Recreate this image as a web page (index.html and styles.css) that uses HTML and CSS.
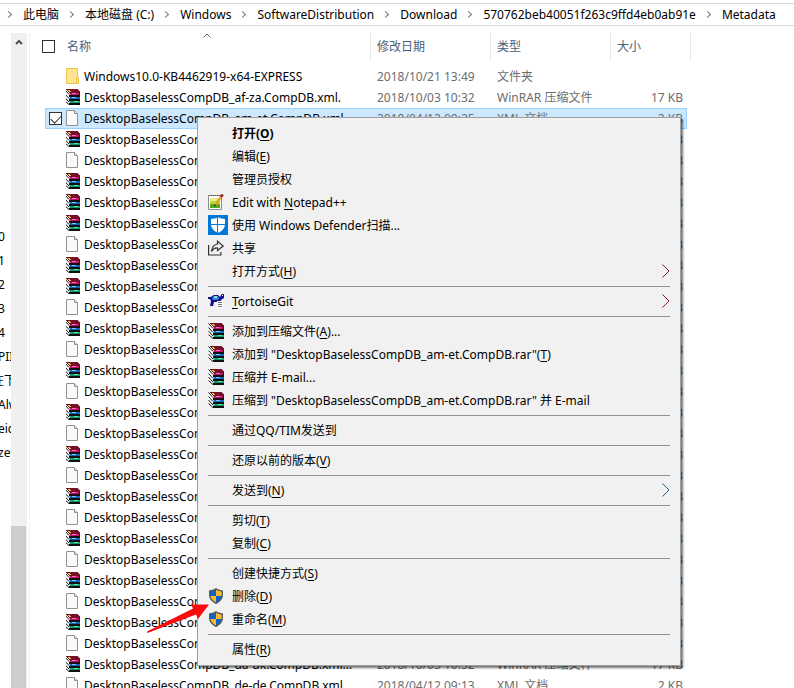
FILE: index.html
```html
<!DOCTYPE html>
<html lang="zh-CN">
<head>
<meta charset="utf-8">
<title>Metadata</title>
<link rel="stylesheet" href="styles.css">
</head>
<body>
<svg class="sprite" aria-hidden="true">
  <symbol id="rar" viewBox="0 0 16 16">
    <g shape-rendering="crispEdges">
    <path fill="#fff" d="M0 1h3l3 4v11H4L0 11z"/>
    <path fill="#111" d="M5 4h11v12H5z"/>
    <path fill="#74102c" d="M2 0h11l3 3v1H5z"/>
    <path fill="#c01468" d="M6 4h9v2H6z"/><path fill="#ff70b8" d="M8 4h4v1H8z"/>
    <path fill="#1468bc" d="M6 8h10v2H6z"/><path fill="#7cc4ff" d="M8 8h4v1H8z"/>
    <path fill="#0ca070" d="M6 12h10v2H6z"/><path fill="#60e0a8" d="M10 12h4v1h-4z"/>
    <path fill="#e8d020" d="M4 1h2v1H4zM5 2h2v1H5zM5 4h1v2H5zM5 8h1v2H5zM5 12h1v2H5z"/>
    </g>
    <path fill="none" stroke="#111" d="M.5.500l4.500 5M.5 4.500L5 9.500M.5 8l4.500 5M.5 11.500L5 15.500"/>
  </symbol>
  <symbol id="doc" viewBox="0 0 16 16">
    <path fill="#fafafa" stroke="#929292" d="M2.500.500h8l3 3v12h-11z"/>
    <path fill="#e4e4e4" stroke="#929292" d="M10.500.500v3h3"/>
  </symbol>
  <symbol id="folder" viewBox="0 0 16 16">
    <path fill="#ffe48f" stroke="#edc34c" d="M2.500.500h11v9h1v6h-12z"/>
    <path fill="none" stroke="#edc34c" d="M12.500 15v-5h1"/>
  </symbol>
  <symbol id="shield" viewBox="0 0 16 16">
    <path fill="#fdb92c" d="M8 .5l1.500 1L14.500 3v4q0 5-6.500 8.500Q1.500 12 1.500 7V3l5-1.500z"/>
    <path fill="#0a64c8" d="M8 .5V8H1.500V3l5-1.500zM8 8h6.300q-.6 4-6.300 7.500z"/>
    <path fill="none" stroke="#505860" stroke-width="1.300" d="M8 .8l1.500 1L14.300 3v4q0 5-6.300 8.300Q1.700 12 1.700 7V3l4.800-1.200z"/>
  </symbol>
  <symbol id="notepad" viewBox="0 0 16 16">
    <path fill="#fff" stroke="#8c8c8c" d="M.5 1.500h13v14H.5z"/>
    <path fill="#e4ee90" d="M2 4h10v3H2z"/><path fill="#b4dc3c" d="M2 7h10v3H2z"/><path fill="#4fae20" d="M2 10h10v4H2z"/>
    <path stroke="#555" stroke-dasharray="1 1" d="M1 1.500h12"/>
    <path stroke="#e8a020" stroke-width="2.500" d="M7.500 11l5-7.500"/>
    <path stroke="#a01818" stroke-width="2.500" d="M12.800 3l2-2.500"/><path fill="#333" d="M6 13l.5-3 2 1.500z"/>
  </symbol>
  <symbol id="defender" viewBox="0 0 20 20">
    <path fill="#0078d7" d="M0 0h20v20H0z"/>
    <path fill="#fff" d="M10 2l2 1.200L17 4v5q0 6-7 9-7-3-7-9V4l5-.8z"/>
    <path stroke="#0078d7" d="M9.500 2v16M3 9.500h14"/>
  </symbol>
  <symbol id="share" viewBox="0 0 16 16">
    <path fill="none" stroke="#333" stroke-width="1.200" d="M.6 5v10h12.300v-3M9.500 1.200l5.700 4.800-5.700 4.500V8Q6 7.500 3.500 11.500 4 5 9.500 4z"/>
  </symbol>
  <symbol id="tortoise" viewBox="0 0 16 16">
    <path fill="#10108c" d="M0 4h3l1-1 2-1h4l2 2 1-2 1-1h2v4l-3 2-1 2 1 3h-3L9 9H6l-1 4H2l1-5-1-2H0z"/>
    <path fill="#3090d8" d="M4 5l2-2h4l1 3-2 1H5z"/><path fill="#78e0e8" d="M6 3h3v2H6z"/><path fill="#fff" d="M14 2h1v1h-1z"/>
    <path fill="#fff" d="M9 8h6v7H9z"/><path stroke="#777" d="M10 9.500h4M10 11.500h4M10 13.500h4"/>
  </symbol>
</svg>

<nav class="breadcrumb" aria-label="路径">
  <a href="#">此电脑</a><a href="#">本地磁盘 (C:)</a><a href="#">Windows</a><a href="#">SoftwareDistribution</a><a href="#">Download</a><a href="#">570762beb40051f263c9ffd4eb0ab91e</a><a href="#">Metadata</a>
</nav>

<main class="explorer">
  <ul class="tree">
    <li>0</li><li>1</li><li>2</li><li>3</li><li>4</li><li>PII</li><li class="cut">在下</li><li>Alw</li><li>eic</li><li>ze</li>
  </ul>
  <div class="scrollbar"><svg class="up" viewBox="0 0 8 6"><path d="M1 5l3-3 3 3"/></svg><div class="thumb"></div></div>
  <section class="files">
    <svg class="sort" viewBox="0 0 8 5"><path d="M.5 4.500L4 1l3.500 3.500"/></svg>
    <table>
      <colgroup><col class="c-check"><col class="c-name"><col class="c-date"><col class="c-type"><col class="c-size"></colgroup>
      <thead><tr><th><input type="checkbox" aria-label="全选"></th><th>名称</th><th>修改日期</th><th>类型</th><th>大小</th></tr></thead>
      <tbody>
        <tr><td></td><td><svg><use href="#folder"/></svg>Windows10.0-KB4462919-x64-EXPRESS</td><td>2018/10/21 13:49</td><td>文件夹</td><td></td></tr>
        <tr><td></td><td><svg><use href="#rar"/></svg>DesktopBaselessCompDB_af-za.CompDB.xml.</td><td>2018/10/03 10:32</td><td>WinRAR 压缩文件</td><td>17 KB</td></tr>
        <tr class="selected"><td><input type="checkbox" aria-label="选择" checked></td><td><svg><use href="#doc"/></svg>DesktopBaselessCompDB_am-et.CompDB.xml</td><td>2018/04/12 09:25</td><td>XML 文档</td><td>2 KB</td></tr>
        <tr><td></td><td><svg><use href="#rar"/></svg>DesktopBaselessCompDB</td><td></td><td></td><td>17 KB</td></tr>
        <tr><td></td><td><svg><use href="#doc"/></svg>DesktopBaselessCompDB</td><td></td><td></td><td>2 KB</td></tr>
        <tr><td></td><td><svg><use href="#rar"/></svg>DesktopBaselessCompDB</td><td></td><td></td><td>17 KB</td></tr>
        <tr><td></td><td><svg><use href="#rar"/></svg>DesktopBaselessCompDB</td><td></td><td></td><td>17 KB</td></tr>
        <tr><td></td><td><svg><use href="#rar"/></svg>DesktopBaselessCompDB</td><td></td><td></td><td>17 KB</td></tr>
        <tr><td></td><td><svg><use href="#doc"/></svg>DesktopBaselessCompDB</td><td></td><td></td><td>2 KB</td></tr>
        <tr><td></td><td><svg><use href="#rar"/></svg>DesktopBaselessCompDB</td><td></td><td></td><td>17 KB</td></tr>
        <tr><td></td><td><svg><use href="#rar"/></svg>DesktopBaselessCompDB</td><td></td><td></td><td>17 KB</td></tr>
        <tr><td></td><td><svg><use href="#doc"/></svg>DesktopBaselessCompDB</td><td></td><td></td><td>2 KB</td></tr>
        <tr><td></td><td><svg><use href="#rar"/></svg>DesktopBaselessCompDB</td><td></td><td></td><td>17 KB</td></tr>
        <tr><td></td><td><svg><use href="#doc"/></svg>DesktopBaselessCompDB</td><td></td><td></td><td>2 KB</td></tr>
        <tr><td></td><td><svg><use href="#rar"/></svg>DesktopBaselessCompDB</td><td></td><td></td><td>17 KB</td></tr>
        <tr><td></td><td><svg><use href="#doc"/></svg>DesktopBaselessCompDB</td><td></td><td></td><td>2 KB</td></tr>
        <tr><td></td><td><svg><use href="#rar"/></svg>DesktopBaselessCompDB</td><td></td><td></td><td>17 KB</td></tr>
        <tr><td></td><td><svg><use href="#doc"/></svg>DesktopBaselessCompDB</td><td></td><td></td><td>2 KB</td></tr>
        <tr><td></td><td><svg><use href="#rar"/></svg>DesktopBaselessCompDB</td><td></td><td></td><td>17 KB</td></tr>
        <tr><td></td><td><svg><use href="#doc"/></svg>DesktopBaselessCompDB</td><td></td><td></td><td>2 KB</td></tr>
        <tr><td></td><td><svg><use href="#rar"/></svg>DesktopBaselessCompDB</td><td></td><td></td><td>17 KB</td></tr>
        <tr><td></td><td><svg><use href="#doc"/></svg>DesktopBaselessCompDB</td><td></td><td></td><td>2 KB</td></tr>
        <tr><td></td><td><svg><use href="#rar"/></svg>DesktopBaselessCompDB</td><td></td><td></td><td>17 KB</td></tr>
        <tr><td></td><td><svg><use href="#doc"/></svg>DesktopBaselessCompDB</td><td></td><td></td><td>2 KB</td></tr>
        <tr><td></td><td><svg><use href="#rar"/></svg>DesktopBaselessCompDB</td><td></td><td></td><td>17 KB</td></tr>
        <tr><td></td><td><svg><use href="#doc"/></svg>DesktopBaselessCompDB</td><td></td><td></td><td>2 KB</td></tr>
        <tr><td></td><td><svg><use href="#rar"/></svg>DesktopBaselessCompDB</td><td></td><td></td><td>17 KB</td></tr>
        <tr><td></td><td><svg><use href="#doc"/></svg>DesktopBaselessCompDB</td><td></td><td></td><td>2 KB</td></tr>
        <tr><td></td><td><svg><use href="#rar"/></svg>DesktopBaselessCompDB_da-dk.CompDB.xml...</td><td>2018/10/03 10:32</td><td>WinRAR 压缩文件</td><td>17 KB</td></tr>
        <tr><td></td><td><svg><use href="#doc"/></svg>DesktopBaselessCompDB_de-de.CompDB.xml</td><td>2018/04/12 09:13</td><td>XML 文档</td><td>2 KB</td></tr>
      </tbody>
    </table>
  </section>
</main>

<div class="menu" role="menu">
  <button role="menuitem"><i></i><b>打开(<u>O</u>)</b></button>
  <button role="menuitem"><i></i><span>编辑(<u>E</u>)</span></button>
  <button role="menuitem"><i></i><span>管理员授权</span></button>
  <button role="menuitem"><i><svg><use href="#notepad"/></svg></i><span>Edit with <u>N</u>otepad++</span></button>
  <button role="menuitem"><i><svg class="large"><use href="#defender"/></svg></i><span>使用 Windows Defender扫描...</span></button>
  <button role="menuitem"><i><svg><use href="#share"/></svg></i><span>共享</span></button>
  <button role="menuitem"><i></i><span>打开方式(<u>H</u>)</span><svg class="more red" viewBox="0 0 8 14"><path d="M.5.500L7 7 .5 13.500"/></svg></button>
  <hr>
  <button role="menuitem"><i><svg><use href="#tortoise"/></svg></i><span><u>T</u>ortoiseGit</span><svg class="more red" viewBox="0 0 8 14"><path d="M.5.500L7 7 .5 13.500"/></svg></button>
  <hr>
  <button role="menuitem"><i><svg><use href="#rar"/></svg></i><span>添加到压缩文件(<u>A</u>)...</span></button>
  <button role="menuitem"><i><svg><use href="#rar"/></svg></i><span>添加到 "DesktopBaselessCompDB_am-et.CompDB.rar"(<u>T</u>)</span></button>
  <button role="menuitem"><i><svg><use href="#rar"/></svg></i><span>压缩并 E-mail...</span></button>
  <button role="menuitem"><i><svg><use href="#rar"/></svg></i><span>压缩到 "DesktopBaselessCompDB_am-et.CompDB.rar" 并 E-mail</span></button>
  <hr>
  <button role="menuitem"><i></i><span>通过QQ/TIM发送到</span></button>
  <hr>
  <button role="menuitem"><i></i><span>还原以前的版本(<u>V</u>)</span></button>
  <hr>
  <button role="menuitem"><i></i><span>发送到(<u>N</u>)</span><svg class="more blue" viewBox="0 0 8 14"><path d="M.5.500L7 7 .5 13.500"/></svg></button>
  <hr>
  <button role="menuitem"><i></i><span>剪切(<u>T</u>)</span></button>
  <button role="menuitem"><i></i><span>复制(<u>C</u>)</span></button>
  <hr>
  <button role="menuitem"><i></i><span>创建快捷方式(<u>S</u>)</span></button>
  <button role="menuitem"><i><svg><use href="#shield"/></svg></i><span>删除(<u>D</u>)</span></button>
  <button role="menuitem"><i><svg><use href="#shield"/></svg></i><span>重命名(<u>M</u>)</span></button>
  <hr>
  <button role="menuitem"><i></i><span>属性(<u>R</u>)</span></button>
</div>
<svg class="pointer" viewBox="0 0 64 30" aria-hidden="true"><path d="M1 28.500L47 5.500 45 1.500 63 1.500 52 16 50 11.500 1.500 30z"/></svg>
</body>
</html>
```
FILE: styles.css
```css
* { box-sizing: border-box; }
body {
  margin: 0;
  height: 100vh;
  overflow: hidden;
  position: relative;
  display: flex;
  flex-direction: column;
  background: #fff;
  color: #000;
  font: 12px/20px "Noto Sans", "Noto Sans CJK SC", sans-serif;
}
.sprite { position: absolute; width: 0; height: 0; }
svg { width: 16px; height: 16px; flex: none; }

.breadcrumb {
  display: flex;
  flex: none;
  gap: 3px;
  height: 23px;
  margin-top: 3px;
  border: solid #d9d9d9;
  border-width: 1px 0;
  white-space: nowrap;
}
.breadcrumb a { display: flex; align-items: center; color: #000; text-decoration: none; }
.breadcrumb a::before {
  content: "";
  width: 4px;
  height: 4px;
  margin: 0 12px 0 6px;
  border: solid #777;
  border-width: 1px 1px 0 0;
  transform: rotate(45deg);
}

.explorer { display: flex; flex: 1; min-height: 0; padding-top: 7px; }
.tree {
  width: 11px;
  margin: 0;
  padding: 192px 0 0;
  overflow: hidden;
  list-style: none;
  line-height: 24px;
  text-indent: -2px;
  white-space: nowrap;
}
.tree .cut { text-indent: -8px; }
.scrollbar { width: 16px; display: flex; flex-direction: column; align-items: flex-start; background: #f0f0f0; }
.up { width: 8px; height: 6px; margin: 6px 4px 0; fill: none; stroke: #505050; stroke-width: 2; }
.thumb { width: 15px; height: 162px; margin-top: auto; background: #cdcdcd; }

.files { position: relative; flex: 1; margin-left: 2px; padding-left: 15px; border-left: 1px solid #f0f0f0; overflow: hidden; }
.sort { position: absolute; left: 173px; top: 0; width: 8px; height: 5px; fill: none; stroke: #666; }
table { width: 642px; table-layout: fixed; border-collapse: collapse; white-space: nowrap; }
.c-check { width: 21px; }
.c-name { width: 304px; }
.c-date, .c-type { width: 120px; }
th { height: 33px; padding: 0 0 6px 7px; text-align: left; font-weight: 400; color: #4c607a; }
th:nth-child(2) { padding-left: 1px; }
th:nth-child(n+3) { background: linear-gradient(#e5e5e5, #e5e5e5) 0 0 / 1px 27px no-repeat; }
th:last-child { border-right: 1px solid #e5e5e5; }
td { height: 21px; padding: 0 0 0 7px; line-height: 20px; color: #6d6d6d; overflow: hidden; }
th:first-child { padding-left: 0; }
th:last-child { border-right: 0; }
td:first-child { padding: 0 0 0 4px; }
td:nth-child(2) { padding: 0; color: #000; }
td:last-child { padding: 0 4px 0 0; text-align: right; }
td svg { margin-right: 4px; margin-left: -2px; vertical-align: -3px; }
.files::after {
  content: "";
  position: absolute;
  left: 660px;
  top: 0;
  height: 27px;
  border-left: 1px solid #e5e5e5;
}
.selected td { background: #cce8ff; box-shadow: inset 0 1px #99d1ff, inset 0 -1px #99d1ff; }
.selected td:first-child { box-shadow: inset 1px 1px #99d1ff, inset 0 -1px #99d1ff; }
.selected td:last-child { box-shadow: inset -1px 1px #99d1ff, inset 0 -1px #99d1ff; }
input {
  appearance: none;
  display: block;
  width: 13px;
  height: 13px;
  margin: 0;
  border: 1px solid #333;
  background: #fff;
}
th input { margin-left: -3px; }
input:checked::after {
  content: "";
  display: block;
  width: 9px;
  height: 5px;
  margin: 2px 1px;
  border: solid #333;
  border-width: 0 0 1px 1px;
  transform: rotate(-45deg);
}

.menu {
  position: absolute;
  left: 197px;
  top: 117px;
  width: 484px;
  padding: 4px 0;
  border: 1px solid #a0a0a0;
  background: #f1f1f1;
  box-shadow: 2px 2px 2px rgba(0, 0, 0, .55);
}
.menu button {
  display: flex;
  align-items: center;
  width: 100%;
  height: 23px;
  padding: 0 10px;
  border: 0;
  background: none;
  color: #000;
  font: inherit;
  text-align: left;
  white-space: nowrap;
}
.menu i { display: flex; flex: none; width: 24px; padding-bottom: 1px; }
.menu .large { width: 20px; height: 20px; }
.menu u { text-underline-offset: 2px; }
.menu hr { height: 1px; margin: 3px 10px; border: 0; background: #919191; }
.more { width: 8px; height: 14px; margin: 0 0 1px auto; fill: none; }
.red { stroke: #8c1c2c; }
.blue { stroke: #1c5c8c; }
.pointer { position: absolute; left: 146px; top: 603px; width: 64px; height: 30px; fill: #fb0d0d; }
```
